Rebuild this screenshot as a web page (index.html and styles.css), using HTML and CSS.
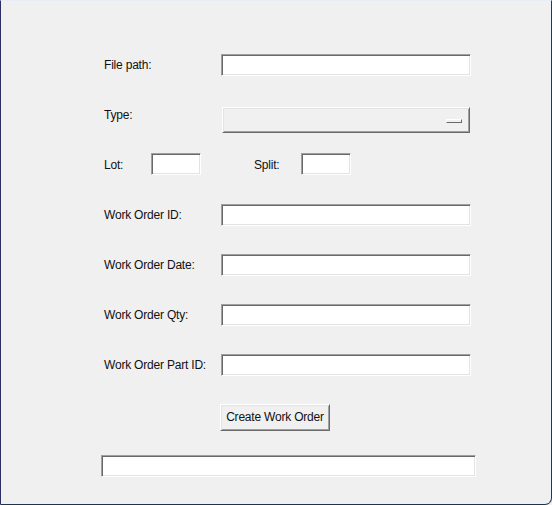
FILE: index.html
```html
<!DOCTYPE html>
<html>
<head>
<meta charset="utf-8">
<link rel="stylesheet" href="styles.css">
</head>
<body>
<div class="window">
  <div class="form">
    <div class="row">
      <span class="label">File path:</span>
      <div class="entry wide"></div>
    </div>
    <div class="row row-type">
      <span class="label">Type:</span>
      <div class="option">
        <span class="indicator"></span>
      </div>
    </div>
    <div class="row row-lot">
      <span class="label lot-label">Lot:</span>
      <div class="entry small"></div>
      <span class="label split-label">Split:</span>
      <div class="entry small"></div>
    </div>
    <div class="row">
      <span class="label">Work Order ID:</span>
      <div class="entry wide"></div>
    </div>
    <div class="row">
      <span class="label">Work Order Date:</span>
      <div class="entry wide"></div>
    </div>
    <div class="row">
      <span class="label">Work Order Qty:</span>
      <div class="entry wide"></div>
    </div>
    <div class="row">
      <span class="label">Work Order Part ID:</span>
      <div class="entry wide"></div>
    </div>
    <div class="row row-button">
      <button class="button" type="button">Create Work Order</button>
    </div>
    <div class="row row-status">
      <div class="entry status"></div>
    </div>
  </div>
</div>
</body>
</html>
```

FILE: styles.css
```css
html, body {
  margin: 0;
  padding: 0;
  background: #f0f0f0;
}

.window {
  width: 552px;
  height: 505px;
  box-sizing: border-box;
  background: #f0f0f0;
  border-left: 1px solid #2b2f66;
  border-right: 1px solid #1f3a55;
  border-bottom: 1px solid #1e3350;
  border-top: 1px solid #e8ecf6;
  border-bottom-right-radius: 7px;
  font-family: "Liberation Sans", Arial, sans-serif;
  font-size: 12px;
  letter-spacing: -0.2px;
  color: #111;
  overflow: hidden;
}

.form {
  padding-top: 53px;
  padding-left: 103px;
  display: flex;
  flex-direction: column;
}

.row {
  height: 50px;
  display: flex;
  align-items: flex-start;
}

.label {
  height: 22px;
  line-height: 22px;
  width: 117px;
  flex: none;
  white-space: nowrap;
}

.entry {
  box-sizing: border-box;
  height: 22px;
  background: #fff;
  border: 1px solid;
  border-color: #a0a0a0 #ffffff #ffffff #a0a0a0;
  box-shadow: inset 1px 1px 0 #696969, inset -1px -1px 0 #e3e3e3;
  flex: none;
}

.wide {
  width: 250px;
}

.row-type {
  height: 49px;
}

.option {
  box-sizing: border-box;
  margin-top: 3px;
  margin-left: 1px;
  width: 248px;
  height: 26px;
  background: #f0f0f0;
  border: 1px solid;
  border-color: #ffffff #696969 #696969 #ffffff;
  box-shadow: inset 1px 1px 0 #e3e3e3, inset -1px -1px 0 #a0a0a0;
  display: flex;
  align-items: center;
  justify-content: flex-end;
  padding-right: 7px;
}

.indicator {
  box-sizing: border-box;
  width: 16px;
  height: 4px;
  border: 1px solid;
  border-color: #ffffff #696969 #696969 #ffffff;
  background: #f0f0f0;
  margin-top: 1px;
}

.row-lot {
  height: 51px;
}

.row-lot .label {
  margin-top: 1px;
}

.lot-label {
  width: 47px;
}

.small {
  width: 50px;
}

.split-label {
  width: 47px;
  margin-left: 53px;
}

.row-button {
  height: 51px;
  padding-left: 116px;
}

.button {
  box-sizing: border-box;
  width: 110px;
  height: 27px;
  margin: 0;
  padding: 0 0 1px;
  font-family: "Liberation Sans", Arial, sans-serif;
  font-size: 12px;
  letter-spacing: -0.2px;
  color: #111;
  background: #f0f0f0;
  border: 1px solid;
  border-color: #ffffff #696969 #696969 #ffffff;
  box-shadow: inset 1px 1px 0 #e3e3e3, inset -1px -1px 0 #a0a0a0;
}

.row-status {
  margin-left: -3px;
}

.status {
  width: 375px;
}
```
